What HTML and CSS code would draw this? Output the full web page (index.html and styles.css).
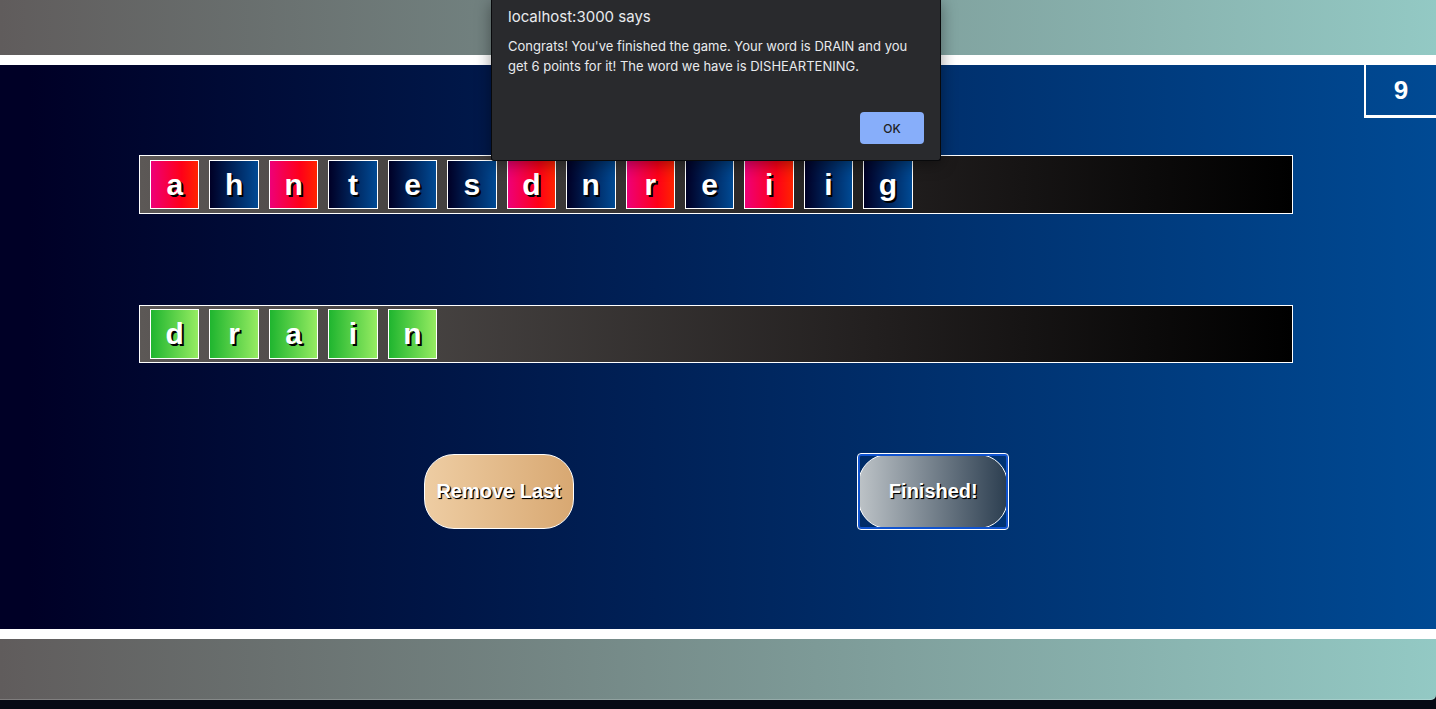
FILE: index.html
```html
<!DOCTYPE html>
<html lang="en">
<head>
<meta charset="utf-8">
<title>Word Game</title>
<link rel="stylesheet" href="styles.css">
</head>
<body>
<div class="page">
  <main class="game">
    <div class="score">9</div>
    <div class="board">
      <div class="row row-letters">
        <button class="tile used">a</button>
        <button class="tile">h</button>
        <button class="tile used">n</button>
        <button class="tile">t</button>
        <button class="tile">e</button>
        <button class="tile">s</button>
        <button class="tile used">d</button>
        <button class="tile">n</button>
        <button class="tile used">r</button>
        <button class="tile">e</button>
        <button class="tile used">i</button>
        <button class="tile">i</button>
        <button class="tile">g</button>
      </div>
      <div class="row">
        <div class="tile picked">d</div>
        <div class="tile picked">r</div>
        <div class="tile picked">a</div>
        <div class="tile picked">i</div>
        <div class="tile picked">n</div>
      </div>
      <div class="actions">
        <button class="action remove">Remove Last</button>
        <button class="action finish">Finished!</button>
      </div>
    </div>
  </main>
</div>
<div class="alert" role="alertdialog" aria-labelledby="alert-title" aria-describedby="alert-text">
  <h1 class="alert-title" id="alert-title">localhost:3000 says</h1>
  <p class="alert-text" id="alert-text">Congrats! You've finished the game. Your word is DRAIN and you get 6 points for it! The word we have is DISHEARTENING.</p>
  <button class="alert-ok">OK</button>
</div>
</body>
</html>
```

FILE: styles.css
```css
* {
  box-sizing: border-box;
}

body {
  margin: 0;
  height: 100vh;
  padding-bottom: 9px;
  overflow: hidden;
  background: #060914;
  font-family: "Liberation Sans", Arial, sans-serif;
}

button {
  font-family: inherit;
  cursor: pointer;
}

.page {
  height: 100%;
  padding: 55px 0 61px;
  background: linear-gradient(to right, #605c5c, #93c9c4);
  border-bottom-right-radius: 5px;
  box-shadow: inset 0 -1px rgba(255, 255, 255, 0.2);
}

.game {
  position: relative;
  height: 100%;
  border-top: 10px solid #fff;
  border-bottom: 10px solid #fff;
  background: linear-gradient(to right, #000026 2%, #004a94);
  color: #fff;
  font-weight: bold;
}

.score {
  position: absolute;
  top: 0;
  right: 0;
  width: 72px;
  height: 53px;
  border-left: 2px solid #fff;
  border-bottom: 3px solid #fff;
  font-size: 26px;
  line-height: 50px;
  text-align: center;
}

.board {
  display: flex;
  flex-direction: column;
  gap: 91px;
  padding: 90px 143px 0 139px;
}

.row {
  display: flex;
  align-items: center;
  gap: 10px;
  height: 58px;
  padding-left: 10px;
  border: 1px solid #fff;
  background: linear-gradient(to right, #5c5856, #211e1e 65%, #000);
}

.row-letters {
  height: 59px;
}

.tile {
  display: flex;
  align-items: center;
  justify-content: center;
  flex: none;
  width: 4.33%;
  aspect-ratio: 1;
  padding: 0;
  border: 1px solid #fff;
  background: linear-gradient(to right, #000026, #004a94);
  color: #fff;
  font-size: 30px;
  font-weight: bold;
  line-height: 34px;
  text-shadow: 2px 2px #000;
}

.used {
  background: linear-gradient(to right, #ee0078, #ff0018 65%, #ff2400);
}

.picked {
  background: linear-gradient(to right, #1fb52f, #96ec62);
}

.actions {
  display: flex;
  justify-content: space-evenly;
}

.action {
  position: relative;
  width: 150px;
  height: 75px;
  padding: 0;
  border: 1px solid #fff;
  border-radius: 30px;
  color: #fff;
  font-size: 20px;
  font-weight: bold;
  text-shadow: 1px 1px 1px #000, 1px 1px #000;
}

.remove {
  background: linear-gradient(to right, #eecda3, #d8a872);
}

.finish {
  background: linear-gradient(to right, #bdc3c7, #2c3e50);
}

.finish::after {
  content: "";
  position: absolute;
  inset: -2px;
  border: 1px solid #fff;
  border-radius: 4px;
  box-shadow: inset 0 0 0 2px #1053cf;
}

.alert {
  position: absolute;
  top: 0;
  left: 50%;
  width: 450px;
  transform: translateX(-50%);
  margin-left: -2px;
  padding: 7px 16px 16px;
  border: 1px solid #08090b;
  border-top: 0;
  border-radius: 0 0 3px 3px;
  background: #292a2d;
  box-shadow: 0 3px 16px rgba(0, 0, 0, 0.4);
  color: #e8eaed;
  font-family: Inter, sans-serif;
}

.alert-title {
  margin: 0 0 9px;
  font-size: 15px;
  font-weight: 400;
  line-height: 20px;
}

.alert-text {
  margin: 0 0 36px;
  font-size: 13px;
  line-height: 20px;
}

.alert-ok {
  display: block;
  width: 64px;
  height: 32px;
  margin-left: auto;
  border: 0;
  border-radius: 4px;
  background: #87aefa;
  color: #202124;
  font-size: 12px;
  font-weight: 500;
}
```
